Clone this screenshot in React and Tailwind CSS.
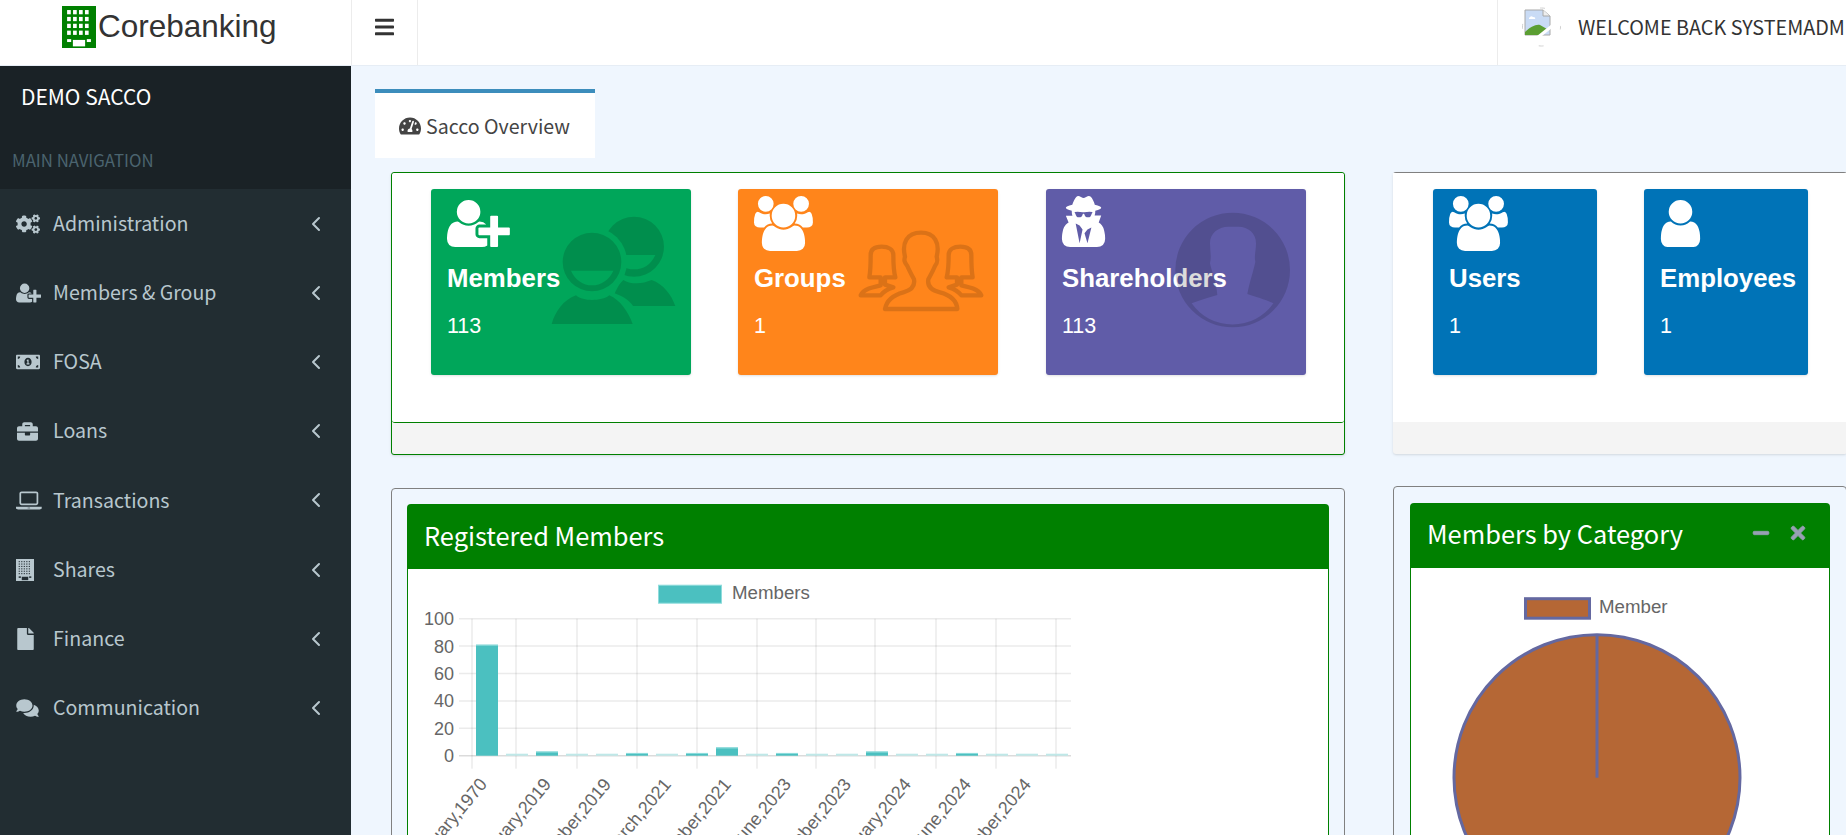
import { FaCogs, FaMoneyBillAlt, FaBriefcase, FaFile, FaComments, FaBars, FaTachometerAlt, FaTimes, FaMinus } from "react-icons/fa";
import { ChevronLeft } from "lucide-react";

const userPath = "M1536 1399q0 109-62.5 187t-150.5 78h-854q-88 0-150.5-78t-62.5-187q0-85 8.5-160.5t31.5-152 58.5-131 94-89 134.5-34.5q131 128 313 128t313-128q76 0 134.5 34.5t94 89 58.5 131 31.5 152 8.5 160.5zm-256-887q0 159-112.5 271.5t-271.5 112.5-271.5-112.5-112.5-271.5 112.5-271.5 271.5-112.5 271.5 112.5 112.5 271.5z";
const usersPath = "M593 896q-162 5-265 128h-134q-82 0-138-40.500t-56-118.500q0-353 124-353 6 0 43.500 21t97.500 42.500 119 21.500q67 0 133-23-5 37-5 66 0 139 81 256zm1071 637q0 120-73 189.500t-194 69.500h-874q-121 0-194-69.500t-73-189.500q0-53 3.500-103.500t14-109 26.500-108.500 43-97.500 62-81 85.500-53.500 111.500-20q10 0 43 21.500t73 48 107 48 135 21.500 135-21.500 107-48 73-48 43-21.500q61 0 111.500 20t85.500 53.500 62 81 43 97.500 26.500 108.500 14 109 3.500 103.500zm-1024-1277q0 106-75 181t-181 75-181-75-75-181 75-181 181-75 181 75 75 181zm704 384q0 159-112.500 271.500t-271.500 112.500-271.500-112.500-112.500-271.500 112.500-271.500 271.500-112.500 271.500 112.500 112.500 271.500zm576 225q0 78-56 118.500t-138 40.500h-134q-103-123-265-128 81-117 81-256 0-29-5-66 66 23 133 23 59 0 119-21.500t97.500-42.500 43.500-21q124 0 124 353zm-128-609q0 106-75 181t-181 75-181-75-75-181 75-181 181-75 181 75 75 181z";
const userPlusPath = "M704 896q-159 0-271.500-112.500t-112.500-271.500 112.500-271.500 271.500-112.500 271.500 112.500 112.500 271.500-112.500 271.500-271.500 112.500zm960 128h352q13 0 22.500 9.500t9.500 22.500v192q0 13-9.500 22.500t-22.500 9.500h-352v352q0 13-9.500 22.500t-22.500 9.500h-192q-13 0-22.500-9.500t-9.500-22.500v-352h-352q-13 0-22.500-9.500t-9.500-22.500v-192q0-13 9.500-22.500t22.500-9.500h352v-352q0-13 9.500-22.500t22.500-9.500h192q13 0 22.500 9.500t9.500 22.500v352zm-736 224q0 52 38 90t90 38h256v238q-68 50-171 50h-874q-121 0-194-69t-73-190q0-53 3.500-103.500t14-109 26.500-108.500 43-97.500 62-81 85.500-53.500 111.500-20q19 0 39 17 79 61 154.500 91.500t164.500 30.500 164.500-30.500 154.500-91.500q20-17 39-17 132 0 217 96h-223q-52 0-90 38t-38 90v192z";
const secretPath = "M704 1536l96-448-96-128-128-64zm256 0l128-512-128 64-96 128zm160-1010q-2-4-4-6-10-8-96-8-70 0-167 19-7 2-21 2t-21-2q-97-19-167-19-86 0-96 8-2 2-4 6 2 18 4 27 2 3 7.500 6.500t7.500 10.500q2 4 7.500 20.500t7 20.500 7.500 17 8.500 17 9 14 12 13.500 14 9.500 17.500 8 20.500 4 24.500 2q36 0 59-12.500t32.500-30 14.500-34.500 11.500-29.500 17.500-12.500h12q11 0 17.500 12.500t11.500 29.500 14.500 34.500 32.500 30 59 12.500q13 0 24.500-2t20.500-4 17.500-8 14-9.500 12-13.500 9-14 8.500-17 7.500-17 7-20.500 7.500-20.500q2-7 7.500-10.500t7.500-6.500q2-9 4-27zm416 879q0 121-73 190t-194 69h-874q-121 0-194-69t-73-190q0-61 4.500-118t19-125.500 37.500-123.500 63.500-103.500 93.500-74.500l-90-220h214q-22-64-22-128 0-12 2-32-194-40-194-96 0-57 210-99 17-62 51.500-134t70.500-114q32-37 76-37 30 0 84 31t84 31 84-31 84-31q44 0 76 36 36 42 70.500 114t51.500 134q210 42 210 99 0 56-194 96 7 81-20 160h214l-82 225q63 33 107.500 96.500t65.500 143.500 29 151.500 8 148.500z";
const laptopPath = "M416 1280q-66 0-113-47t-47-113v-704q0-66 47-113t113-47h1088q66 0 113 47t47 113v704q0 66-47 113t-113 47h-1088zm-32-864v704q0 13 9.500 22.500t22.500 9.500h1088q13 0 22.500-9.500t9.500-22.500v-704q0-13-9.500-22.500t-22.500-9.500h-1088q-13 0-22.500 9.500t-9.500 22.500zm1376 992h160v96q0 40-47 68t-113 28h-1600q-66 0-113-28t-47-68v-96h1760zm-720 96q16 0 16-16t-16-16h-160q-16 0-16 16t16 16h160z";

function Fa4({ d, w = 1792, className }) {
  return (
    <svg viewBox={`0 0 ${w} 1792`} className={className} fill="currentColor">
      <path d={d} />
    </svg>
  );
}

// building glyph, used for the logo and the Shares item
function Building({ cols, rows, className, bg, win, dot = 0.62 }) {
  const dots = [];
  const cw = 14 / cols;
  const ch = 17 / rows;
  for (let r = 0; r < rows; r++) {
    for (let c = 0; c < cols; c++) {
      dots.push(<rect key={r + "-" + c} x={3 + c * cw} y={2.5 + r * ch} width={cw * dot} height={ch * dot} fill={win} />);
    }
  }
  return (
    <svg viewBox="0 0 20 26" className={className} preserveAspectRatio="none">
      <rect width="20" height="26" fill={bg} />
      {dots}
      <rect x="3" y="20.5" width="2.4" height="1.8" fill={win} />
      <rect x="14.6" y="20.5" width="2.4" height="1.8" fill={win} />
      <rect x="6.4" y="21" width="7.2" height="4" fill={win} />
    </svg>
  );
}

function MembersMark() {
  return (
    <svg viewBox="0 0 480 420" className="absolute left-[99px] top-[11px] w-[160px] h-[140px]">
      <defs>
        <mask id="backCut">
          <rect width="480" height="420" fill="white" />
          <circle cx="186" cy="186" r="105" fill="black" />
          <path d="M40,372 C70,280 130,270 186,270 C250,270 320,290 330,372 Z" fill="black" />
        </mask>
      </defs>
      <g fill="#000" fillOpacity="0.14">
        <path fillRule="evenodd" d="M98,186 A88,88 0 1 1 274,186 A88,88 0 1 1 98,186 Z M123,212 H250 C238,240 212,256 186,256 C160,256 135,240 123,212 Z" />
        <path d="M65,372 C75,335 100,300 138,286 C150,296 168,300 186,300 C205,300 225,296 238,286 C270,300 295,335 308,372 Z" />
        <g mask="url(#backCut)">
          <path fillRule="evenodd" d="M222,140 A90,90 0 1 1 402,140 A90,90 0 1 1 222,140 Z M250,165 H376 C362,195 340,208 312,208 C285,208 262,195 250,165 Z" />
          <path d="M240,318 C250,290 262,255 280,240 C295,248 305,250 320,250 C335,250 350,246 365,240 C400,252 425,285 436,318 Z" />
        </g>
      </g>
    </svg>
  );
}

function GroupsMark() {
  const side = "M62,256 C70,238 95,232 122,226 V202 H88 C92,180 92,150 92,135 C92,118 105,110 125,110 C145,110 160,118 160,135 C160,150 160,180 166,202 H135 V224 L160,232 C140,238 130,245 122,256 Z";
  return (
    <svg viewBox="0 0 450 330" className="absolute left-[102px] top-[21px] w-[150px] h-[110px]">
      <g fill="none" stroke="#000" strokeOpacity="0.14" strokeWidth="13" strokeLinejoin="round">
        <path d="M135,297 H352 C350,270 330,255 300,247 C270,240 262,225 265,208 C272,195 280,180 285,168 C295,155 292,150 290,140 C300,100 285,68 243,68 C200,68 185,100 195,140 C192,150 192,155 202,168 C207,180 215,195 222,208 C225,225 218,240 190,247 C160,255 140,270 135,297 Z" />
        <path d={side} />
        <path d={side} transform="translate(486 0) scale(-1 1)" />
      </g>
    </svg>
  );
}

function ShareMark() {
  return (
    <svg viewBox="0 0 450 420" className="absolute left-[114px] top-[11px] w-[150px] h-[140px]">
      <path
        fill="#000"
        fillOpacity="0.14"
        fillRule="evenodd"
        d="M46,210 A172,172 0 1 1 390,210 A172,172 0 1 1 46,210 Z M150,130 C150,100 175,80 205,80 L235,80 C265,80 288,100 288,130 C288,150 282,170 286,185 C280,215 270,240 262,282 C285,290 320,300 340,310 A150,150 0 0 1 95,310 C120,300 150,292 172,285 C170,250 155,215 150,190 C155,170 150,150 150,130 Z"
      />
    </svg>
  );
}

function StatCard({ color, width, icon, iconW, iconClass = "", title, count, mark }) {
  return (
    <div className={`relative overflow-hidden rounded-[3px] h-[186px] pl-[16px] pt-[7px] text-white shadow-sm ${color} ${width}`}>
      <Fa4 d={icon} w={iconW} className={`block h-[55px] ${iconClass}`} />
      <div className="mt-[9px] leading-[36px] text-[25.8px] font-bold font-['Liberation_Sans',sans-serif] whitespace-nowrap">{title}</div>
      <div className="mt-[17px] leading-[26px] text-[21.5px] font-['Liberation_Sans',sans-serif]">{count}</div>
      {mark}
    </div>
  );
}

const navItems = [
  { label: "Administration", icon: <FaCogs className="w-[24px] h-[22px]" /> },
  { label: "Members & Group", icon: <Fa4 d={userPlusPath} w={2048} className="h-[22px]" /> },
  { label: "FOSA", icon: <FaMoneyBillAlt className="w-[24px] h-[20px]" /> },
  { label: "Loans", icon: <FaBriefcase className="w-[23px] h-[21px]" /> },
  { label: "Transactions", icon: <Fa4 d={laptopPath} w={1920} className="h-[24px]" /> },
  { label: "Shares", icon: <Building cols={5} rows={6} bg="#b8c7ce" win="#222d32" dot={0.45} className="w-[18px] h-[22px]" /> },
  { label: "Finance", icon: <FaFile className="w-[19px] h-[22px]" /> },
  { label: "Communication", icon: <FaComments className="w-[23px] h-[20px]" /> },
];

const barValues = [81, 1, 3, 1, 1, 2, 1, 2, 6, 1, 2, 1, 1, 3, 1, 1, 2, 1, 1, 1];
const gridX = [471, 515, 576, 636, 696, 756, 815, 874, 935, 995, 1055];
const xLabels = ["January,1970", "February,2019", "November,2019", "March,2021", "November,2021", "June,2023", "November,2023", "January,2024", "June,2024", "November,2024"];

function BarChart() {
  const font = "'Liberation Sans', sans-serif";
  return (
    <svg viewBox="407 571.3 700 270" className="block w-[700px] h-[270px]" fontFamily={font}>
      <rect x="657.5" y="587.5" width="63" height="18" fill="#4bc0c0" stroke="#8fdcdc" />
      <text x="731" y="601.5" fontSize="18.7" fill="#666">Members</text>
      {[100, 80, 60, 40, 20, 0].map((v, i) => {
        const y = 621 + i * 27.4;
        return (
          <g key={v}>
            <line x1="458" x2="1070" y1={y} y2={y} stroke="#000" strokeOpacity={v === 0 ? 0.14 : 0.08} strokeWidth="1.5" />
            <text x="453" y={y + 6.5} fontSize="18" fill="#666" textAnchor="end">{v}</text>
          </g>
        );
      })}
      {gridX.map((x) => (
        <line key={x} x1={x} x2={x} y1="621" y2="771" stroke="#000" strokeOpacity="0.12" />
      ))}
      {barValues.map((v, i) => {
        const x = 475 + i * 30;
        const h = v * 1.37;
        if (v === 1) return <rect key={i} x={x} y="756" width="22" height="2" fill="#bfe8e8" />;
        return (
          <g key={i}>
            <rect x={x} y={758 - h} width="22" height={h} fill="#4bc0c0" />
            <rect x={x} y={758 - h} width="22" height="1" fill="#8fdcdc" />
          </g>
        );
      })}
      {xLabels.map((t, i) => {
        const x = (i === 0 ? 487 : 491) + i * 60;
        return (
          <text key={t} x={x} y="787" fontSize="18" fill="#666" textAnchor="end" transform={`rotate(-50 ${x} 787)`}>{t}</text>
        );
      })}
    </svg>
  );
}

function PieChart() {
  return (
    <svg viewBox="1411 569.3 420 270" className="block w-[420px] h-[270px]" fontFamily="'Liberation Sans', sans-serif">
      <rect x="1525.5" y="600" width="64" height="19.500" fill="#b56735" stroke="#6468a0" strokeWidth="3" />
      <text x="1599" y="614.500" fontSize="18.7" fill="#666">Member</text>
      <circle cx="1597" cy="779" r="143" fill="#b56735" stroke="#6468a0" strokeWidth="3" />
      <line x1="1597" x2="1597" y1="636" y2="779" stroke="#6468a0" strokeWidth="3" />
    </svg>
  );
}

function BrokenAvatar() {
  return (
    <svg viewBox="0 0 39 40" className="w-[39px] h-[40px] shrink-0">
      <circle cx="19.500" cy="20" r="19" fill="none" stroke="#c4c4c4" strokeWidth="0.8" strokeDasharray="5 25" strokeDashoffset="2.500" />
      <path d="M3,3 H21 L28,9 V28 H3 Z" fill="#c9dbf5" stroke="#a8a8a8" strokeWidth="1" />
      <path d="M21,3 V9 H28" fill="#eee" stroke="#a8a8a8" strokeWidth="1" />
      <path d="M7,11 q2,-3 4,-1 q3,0 2,2 H7 Z" fill="#fff" />
      <path d="M3,28 V25 C8,20 14,17 18,18 L25,22 L18,28 Z" fill="#5b9e32" />
      <path d="M15,31 L30,19" stroke="#fff" strokeWidth="3" />
    </svg>
  );
}

export default function App() {
  return (
    <div className="w-[1846px] h-[835px] overflow-hidden flex flex-col bg-[#eff6fe] font-['Noto_Sans_CJK_SC',sans-serif]">
      {/* top bar */}
      <header className="flex h-[66px] shrink-0 bg-white border-b border-[#e6edf5]">
        <div className="w-[352px] shrink-0 border-r border-[#ececec] flex items-center pl-[62px] pb-[11px]">
          <Building cols={4} rows={4} bg="#008000" win="#ffffff" className="w-[34px] h-[42px]" />
          <span className="ml-[2px] text-[31.5px] leading-none text-[#333] font-['Liberation_Sans',sans-serif]">Corebanking</span>
        </div>
        <div className="w-[66px] shrink-0 border-r border-[#ececec] flex items-center justify-center pb-[12px]">
          <FaBars className="w-[19px] h-[22px] text-[#333]" />
        </div>
        <div className="ml-auto w-[349px] shrink-0 border-l border-[#ececec] flex items-center pl-[24px] pb-[11px] whitespace-nowrap overflow-hidden">
          <BrokenAvatar />
          <span className="ml-[17px] text-[19.8px] text-[#333]">WELCOME BACK SYSTEMADMIN</span>
        </div>
      </header>

      <div className="flex flex-1 min-h-0">
        {/* sidebar */}
        <aside className="w-[351px] shrink-0 bg-[#222d32]">
          <div className="h-[123px] bg-[#1a2226]">
            <div className="pl-[21px] pt-[14px] text-[21px] leading-[32px] text-white">DEMO SACCO</div>
            <div className="pl-[12px] mt-[36px] text-[16.800px] leading-[24px] text-[#4b646f]">MAIN NAVIGATION</div>
          </div>
          {navItems.map((item) => (
            <div key={item.label} className="h-[69.2px] flex items-center pl-[16px] pr-[23px] text-[#b8c7ce]">
              <span className="w-[37px] shrink-0">{item.icon}</span>
              <span className="text-[19.6px] pb-[2px]">{item.label}</span>
              <ChevronLeft className="ml-auto w-[24px] h-[24px]" strokeWidth={2} />
            </div>
          ))}
        </aside>

        {/* main */}
        <main className="flex-1 min-w-0 overflow-hidden pl-[24px] pt-[23px]">
          <div className="w-[220px] h-[69px] bg-white border-t-[4px] border-[#3c8dbc] flex items-center pl-[24px] text-[#444]">
            <FaTachometerAlt className="w-[22px] h-[20px]" />
            <span className="ml-[5px] text-[19.6px] whitespace-nowrap">Sacco Overview</span>
          </div>

          <div className="flex gap-[48px] pl-[16px] mt-[14px]">
            <div className="w-[954px] shrink-0">
              <div className="h-[283px] rounded-[3px] border border-[#008000] bg-[#f4f4f4] shadow-sm">
                <div className="h-[250px] flex gap-[47px] bg-white border-b border-[#008000] rounded-[3px] pl-[39px] pt-[16px]">
                  <StatCard color="bg-[#00a65a]" width="w-[260px]" icon={userPlusPath} iconW={2048} title="Members" count="113" mark={<MembersMark />} />
                  <StatCard color="bg-[#ff851b]" width="w-[260px]" icon={usersPath} iconW={2048} title="Groups" count="1" mark={<GroupsMark />} />
                  <StatCard color="bg-[#605ca8]" width="w-[260px] ml-[1px]" icon={secretPath} iconW={1792} iconClass="-ml-[4px]" title="Shareholders" count="113" mark={<ShareMark />} />
                </div>
              </div>

              <div className="mt-[33px] h-[500px] rounded-[4px] border border-[#808080] p-[15px]">
                <div className="rounded-t-[4px] overflow-hidden">
                  <div className="h-[65px] bg-[#008000] flex items-center pl-[17px] pb-[3px] text-[25.4px] text-white">Registered Members</div>
                  <div className="h-[400px] bg-white border-x border-[#008000]">
                    <BarChart />
                  </div>
                </div>
              </div>
            </div>

            <div className="w-[454px] shrink-0">
              <div className="h-[282px] rounded-[3px] border-t border-[#808080] bg-[#f4f4f4] shadow-sm">
                <div className="h-[249px] flex gap-[47px] bg-white pl-[40px] pt-[16px]">
                  <StatCard color="bg-[#0073b7]" width="w-[164px]" icon={usersPath} iconW={2048} title="Users" count="1" />
                  <StatCard color="bg-[#0073b7]" width="w-[164px]" icon={userPath} iconW={1792} iconClass="-ml-[7px]" title="Employees" count="1" />
                </div>
              </div>

              <div className="mt-[32px] h-[500px] rounded-[4px] border border-[#808080] p-[16px]">
                <div className="rounded-t-[4px] overflow-hidden">
                  <div className="h-[65px] bg-[#008000] flex items-center pl-[17px] pr-[24px] pb-[5px] text-[25.4px] text-white">
                    <span>Members by Category</span>
                    <FaMinus className="ml-auto w-[18px] h-[18px] text-[#97a0b3]" stroke="currentColor" strokeWidth={20} />
                    <FaTimes className="ml-[20px] w-[16px] h-[20px] text-[#97a0b3]" stroke="currentColor" strokeWidth={20} />
                  </div>
                  <div className="h-[400px] bg-white border-x border-[#008000]">
                    <PieChart />
                  </div>
                </div>
              </div>
            </div>
          </div>
        </main>
      </div>
    </div>
  );
}
